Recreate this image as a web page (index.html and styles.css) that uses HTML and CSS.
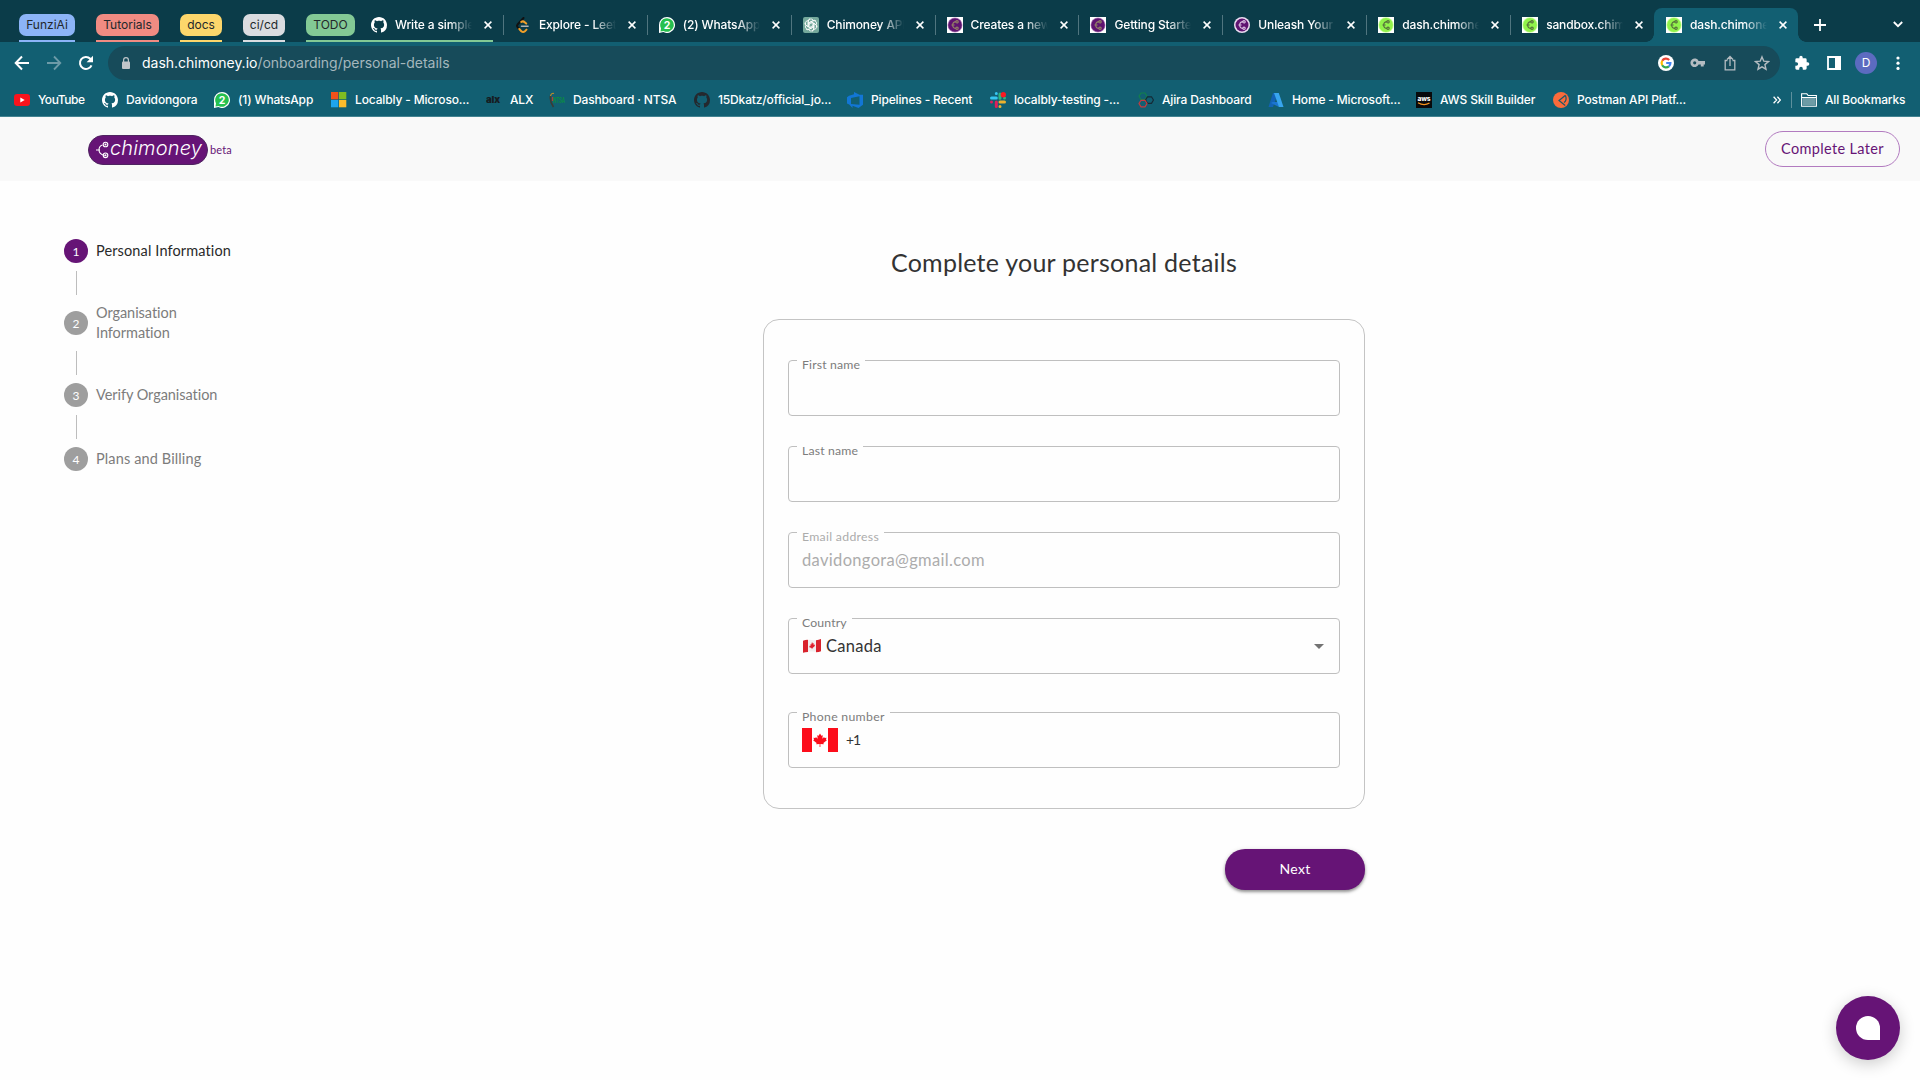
FILE: index.html
```html
<!DOCTYPE html>
<html lang="en">
<head>
<meta charset="utf-8">
<title>Chimoney – Personal details</title>
<link rel="stylesheet" href="styles.css">
</head>
<body>
<svg class="defs" aria-hidden="true">
  <symbol id="github" viewBox="0 0 16 16"><path fill="currentColor" d="M8 0C3.58 0 0 3.58 0 8c0 3.54 2.29 6.53 5.47 7.59.4.07.55-.17.55-.38 0-.19-.01-.82-.01-1.49-2.01.37-2.53-.49-2.69-.94-.09-.23-.48-.94-.82-1.13-.28-.15-.68-.52-.01-.53.63-.01 1.08.58 1.23.82.72 1.21 1.87.87 2.33.66.07-.52.28-.87.51-1.07-1.78-.2-3.64-.89-3.64-3.95 0-.87.31-1.59.82-2.15-.08-.2-.36-1.02.08-2.12 0 0 .67-.21 2.2.82.64-.18 1.32-.27 2-.27s1.36.09 2 .27c1.53-1.04 2.2-.82 2.2-.82.44 1.1.16 1.92.08 2.12.51.56.82 1.27.82 2.15 0 3.07-1.87 3.75-3.65 3.95.29.25.54.73.54 1.48 0 1.07-.01 1.93-.01 2.2 0 .21.15.46.55.38A8.01 8.01 0 0 0 16 8c0-4.42-3.58-8-8-8z"/></symbol>
  <symbol id="whatsapp" viewBox="0 0 16 16"><path fill="#fff" d="M8 0a8 8 0 1 1-3.7 15.1L0 16V8a8 8 0 0 1 8-8z"/><path fill="#25c04f" d="M8 1.2a6.8 6.8 0 1 1-3.4 12.7l-3.1.7.5-3.3A6.8 6.8 0 0 1 8 1.2z"/><text x="8.1" y="11.8" text-anchor="middle" font-size="10.5" font-weight="700" fill="#fff">2</text></symbol>
  <symbol id="branch" viewBox="0 0 16 16"><g fill="none" stroke="currentColor" stroke-width="1.2"><path d="M9.2 4.6C6.3 4.6 5.7 7 5.6 8C5.7 9.2 6.4 11.4 9.2 11.5M4.4 8h3.2"/><circle cx="10" cy="4.8" r="1.2"/><circle cx="10" cy="11.3" r="1.2"/></g></symbol>
  <symbol id="purple" viewBox="0 0 16 16"><path fill="#fff" d="M0 0h16v16H0z"/><circle cx="8" cy="8" r="7.5" fill="#b98bc2"/><circle cx="8" cy="8" r="6.8" fill="#5f1370"/><use href="#branch" color="#938066"/></symbol>
  <symbol id="purple-round" viewBox="0 0 16 16"><circle cx="8" cy="8" r="8" fill="#eadcf0"/><circle cx="8" cy="8" r="6.5" fill="#5f1370"/><use href="#branch" color="#d8bfe0"/></symbol>
  <symbol id="lime" viewBox="0 0 16 16"><path fill="#fff" d="M0 0h16v16H0z"/><circle cx="8" cy="8" r="7.7" fill="#c9ff9f"/><circle cx="8" cy="8" r="6.9" fill="#91f34b"/><use href="#branch" color="#56703c"/></symbol>
  <symbol id="close" viewBox="0 0 8 8"><path d="M.6.6l6.8 6.8M7.4.6L.6 7.4" stroke="#fff" stroke-width="1.5"/></symbol>
</svg>

<header class="browser">
  <div class="tabstrip">
    <div class="groups">
      <span class="group blue"><b>FunziAi</b></span>
      <span class="group red"><b>Tutorials</b></span>
      <span class="group yellow"><b>docs</b></span>
      <span class="group grey"><b>ci/cd</b></span>
      <span class="group green"><b>TODO</b></span>
    </div>
    <div class="tabs">
      <div class="tab grouped"><svg class="ico"><use href="#github"/></svg><span>Write a simple</span><svg class="x"><use href="#close"/></svg></div>
      <div class="tab"><svg class="ico" viewBox="0 0 16 16"><g fill="none" stroke-width="2" stroke-linecap="round"><path stroke="#111" d="M8.5 1L2.8 7.2Q1.4 8.800 2.800 10.400l1.400 1.600"/><path stroke="#f0a029" d="M4.300 12l2 2.200q1.800 1.500 3.600 0l1.600-1.600M6.200 5q1.800-1.400 3.500.2l1.500 1.400"/><path stroke="#b3b3b3" d="M6.500 9.200h6.500" stroke-width="1.600"/></g></svg><span>Explore - LeetCode</span><svg class="x"><use href="#close"/></svg></div>
      <div class="tab"><svg class="ico"><use href="#whatsapp"/></svg><span>(2) WhatsApp</span><svg class="x"><use href="#close"/></svg></div>
      <div class="tab"><svg class="ico" viewBox="0 0 16 16"><rect width="16" height="16" rx="2" fill="#75a99c"/><g fill="none" stroke="#fff" stroke-width=".8"><g id="petal"><path d="M5.200 10V4.800a2.800 2.800 0 0 1 5.200-1.500M6.400 8V5.700l3.600-2a2.800 2.800 0 0 1 3 .2"/></g><use href="#petal" transform="rotate(60 8 8)"/><use href="#petal" transform="rotate(120 8 8)"/><use href="#petal" transform="rotate(180 8 8)"/><use href="#petal" transform="rotate(240 8 8)"/><use href="#petal" transform="rotate(300 8 8)"/></g></svg><span>Chimoney API</span><svg class="x"><use href="#close"/></svg></div>
      <div class="tab"><svg class="ico"><use href="#purple"/></svg><span>Creates a new</span><svg class="x"><use href="#close"/></svg></div>
      <div class="tab"><svg class="ico"><use href="#purple"/></svg><span>Getting Started</span><svg class="x"><use href="#close"/></svg></div>
      <div class="tab"><svg class="ico"><use href="#purple-round"/></svg><span>Unleash Your</span><svg class="x"><use href="#close"/></svg></div>
      <div class="tab"><svg class="ico"><use href="#lime"/></svg><span>dash.chimoney</span><svg class="x"><use href="#close"/></svg></div>
      <div class="tab last"><svg class="ico"><use href="#lime"/></svg><span>sandbox.chimoney</span><svg class="x"><use href="#close"/></svg></div>
      <div class="tab active"><svg class="ico"><use href="#lime"/></svg><span>dash.chimoney</span><svg class="x"><use href="#close"/></svg></div>
    </div>
    <svg class="plus" viewBox="0 0 12 12"><path d="M6 0v12M0 6h12" stroke="#fff" stroke-width="1.8"/></svg>
    <svg class="chev" viewBox="0 0 10 7"><path d="M.8 1L5 5.2 9.2 1" fill="none" stroke="#fff" stroke-width="1.8"/></svg>
  </div>

  <div class="toolbar">
    <div class="nav">
      <svg viewBox="0 0 16 16"><path d="M15 8H2M8 1.5L1.7 8 8 14.5" fill="none" stroke="#fff" stroke-width="2"/></svg>
      <svg viewBox="0 0 16 16"><path d="M1 8h13M8 1.5L14.3 8 8 14.5" fill="none" stroke="#6d9ba8" stroke-width="1.8"/></svg>
      <svg viewBox="0 0 16 16"><path d="M13.5 10.3A6 6 0 1 1 12.3 3.8L14 5.5" fill="none" stroke="#fff" stroke-width="2"/><path d="M15 .8v6.4H8.6z" fill="#fff"/></svg>
    </div>
    <div class="omnibox">
      <svg class="lock" viewBox="0 0 10 12"><rect x="1" y="4.5" width="8" height="7.5" rx="1" fill="#c0c6ca"/><path d="M2.6 5V3a2.4 2.4 0 0 1 4.8 0v2" fill="none" stroke="#c0c6ca" stroke-width="1.2"/></svg>
      <span class="url"><em>dash.chimoney.io</em>/onboarding/personal-details</span>
      <div class="actions">
        <svg viewBox="0 0 16 16"><circle cx="8" cy="8" r="8" fill="#fff"/><g fill="none" stroke-width="2.2"><path stroke="#ea4335" d="M4.2 5.8A4.4 4.4 0 0 1 11.2 4.9"/><path stroke="#fbbc05" d="M4.2 5.8a4.4 4.4 0 0 0 0 4.4"/><path stroke="#34a853" d="M4.2 10.2a4.4 4.4 0 0 0 6.7 1.1"/><path stroke="#4285f4" d="M10.9 11.3A4.4 4.4 0 0 0 12.4 8H8.2"/></g></svg>
        <svg viewBox="0 0 16 16"><path fill="#b4bcc1" fill-rule="evenodd" d="M8.6 6H15v3.600h-1.300v2h-2.900v-2H8.600a4.300 4.300 0 1 1 0-3.600zM4.700 6.200a1.600 1.600 0 1 0 0 3.200 1.600 1.600 0 0 0 0-3.200z"/></svg>
        <svg viewBox="0 0 16 16"><g fill="none" stroke="#b4bcc1" stroke-width="1.3"><path d="M5.5 5.5H3.2v9.300h9.600V5.500h-2.300M8 11V1.800M5 4.500l3-3 3 3"/></g></svg>
        <svg viewBox="0 0 16 16"><path d="M8 1.9l1.800 4.300 4.600.4-3.500 3 1.100 4.600L8 11.800l-4 2.400 1.100-4.600-3.500-3 4.600-.4z" fill="none" stroke="#b4bcc1" stroke-width="1.4"/></svg>
      </div>
    </div>
    <div class="side">
      <svg viewBox="0 0 24 24"><path fill="#fff" d="M20.5 11H19V7a2 2 0 0 0-2-2h-4V3.500a2.500 2.500 0 0 0-5 0V5H4a2 2 0 0 0-2 2v3.800h1.500a2.700 2.700 0 0 1 0 5.400H2V20a2 2 0 0 0 2 2h3.800v-1.500a2.700 2.700 0 0 1 5.400 0V22H17a2 2 0 0 0 2-2v-4h1.500a2.500 2.500 0 0 0 0-5z"/></svg>
      <svg viewBox="0 0 16 16"><path d="M2 2h12v12H2z" fill="none" stroke="#fff" stroke-width="1.8"/><path fill="#fff" d="M9 1h6v14H9z"/></svg>
      <span class="avatar">D</span>
      <svg viewBox="0 0 16 16" fill="#fff"><circle cx="8" cy="3" r="1.6"/><circle cx="8" cy="8.2" r="1.6"/><circle cx="8" cy="13.4" r="1.6"/></svg>
    </div>
  </div>

  <div class="bookmarks">
    <span class="tight"><svg viewBox="0 0 16 16"><rect y="2" width="16" height="12" rx="3" fill="#f8131c"/><path fill="#fff" d="M6.3 5.5v5L10.7 8z"/></svg>YouTube</span>
    <span><svg><use href="#github"/></svg>Davidongora</span>
    <span><svg><use href="#whatsapp"/></svg>(1) WhatsApp</span>
    <span><svg viewBox="0 0 16 16"><path fill="#f1511b" d="M0 0h7.3v7.300H0z"/><path fill="#80bc22" d="M8 0h7.300v7.300H8z"/><path fill="#1ea5ee" d="M0 8h7.300v7.300H0z"/><path fill="#fbbc2c" d="M8 8h7.300v7.300H8z"/></svg>Localbly - Microso...</span>
    <span><svg viewBox="0 0 16 16"><text x="0" y="11" font-size="9.5" font-weight="900" textLength="14" lengthAdjust="spacingAndGlyphs" fill="#161d22">alx</text></svg>ALX</span>
    <span><svg viewBox="0 0 16 16"><path d="M4.5 15Q.5 9 1.500 4" fill="none" stroke="#3b3c35" stroke-width="1.600"/><path d="M1.500 4Q2.500 .5 5 1.500" fill="none" stroke="#b98a2b" stroke-width="1.200"/><path d="M3.500 5v4" stroke="#b23a3a" stroke-width="1.200"/><text x="4" y="10.500" font-size="7" font-weight="700" textLength="12" lengthAdjust="spacingAndGlyphs" fill="#0b8a45">NTSA</text></svg>Dashboard · NTSA</span>
    <span class="dark-git"><svg><use href="#github"/></svg><i>15Dkatz/official_jo...</i></span>
    <span><svg viewBox="0 0 16 16"><path fill="#1276d5" fill-rule="evenodd" d="M16 2.800v10L11.500 16l-6-2.200V16L2.200 12.600 0 11.500V5.300l2-1.600L7 2.300V0l5.500 2.800zM12.500 4.300L4 6v6l8.500.8z"/></svg>Pipelines - Recent</span>
    <span><svg viewBox="0 0 16 16"><g stroke-width="3" stroke-linecap="round"><path stroke="#36c5f0" d="M6.300 1.500v0M1.500 6h4.800"/><path stroke="#2eb67d" d="M10 2v4.300M14.500 6v0"/><path stroke="#ecb22e" d="M10 10h4.500M10 14.500v0"/><path stroke="#e01e5a" d="M6.300 10v4.500M1.500 10v0"/></g><circle cx="13.300" cy="2.800" r="2.700" fill="#fa1822"/></svg>localbly-testing -...</span>
    <span><svg viewBox="0 0 16 16"><g fill="none" stroke-width="1.200"><path stroke="#13804c" d="M3 1h4l2 3.300-2 3.200H3L1 4.300z"/><path stroke="#152a36" d="M9.500 4.800h4l2 3.200-2 3.300h-4L7.500 8z"/><path stroke="#c33b40" d="M3 8.300h4l2 3.200L7 14.800H3l-2-3.300z"/></g></svg>Ajira Dashboard</span>
    <span><svg viewBox="0 0 16 16"><path fill="#1263b5" d="M5 1h5L5 15H.5z"/><path fill="#1b75d0" d="M4.500 10H11v5L3 11z"/><path fill="#38a5ee" d="M6 1h4.800L15.500 15H11z"/></svg>Home - Microsoft...</span>
    <span><svg viewBox="0 0 16 16"><path fill="#080a0c" d="M0 0h16v16H0z"/><text x="1.500" y="8.500" font-size="7" font-weight="800" textLength="13" lengthAdjust="spacingAndGlyphs" fill="#fff">aws</text><path d="M2 10.800q6 3.500 11.500.3" fill="none" stroke="#f7941d" stroke-width="1.200"/></svg>AWS Skill Builder</span>
    <span><svg viewBox="0 0 16 16"><circle cx="8" cy="8" r="8" fill="#fb6b3b"/><path d="M12.500 3.200L6 8.500l6.200 5M12.500 3.500q1.700 5-1.500 7" fill="none" stroke="#1b5768" stroke-width="1.200"/></svg>Postman API Platf...</span>
    <span class="more"><svg viewBox="0 0 8 8"><path d="M.6.8l3 3.200-3 3.200M4.400.8l3 3.200-3 3.200" fill="none" stroke="#fff" stroke-width="1.300"/></svg></span>
    <span class="all"><svg viewBox="0 0 16 14"><path d="M.6.8h5.200l1.400 1.700h8.200v10.700H.6z" fill="none" stroke="#fff" stroke-width="1.100"/><path d="M1.500 5h13v7.500h-13z" fill="#6d9ba5"/><path d="M1 4.500h14" stroke="#fff"/></svg>All Bookmarks</span>
  </div>
</header>

<div class="appbar">
  <div class="brand">
    <div class="logo"><svg viewBox="0 0 14 18"><g fill="none" stroke="#fff" stroke-width="1.100"><path d="M6.500 4Q3 5 3 9t5.500 5.500M0 9h4"/><circle cx="9.500" cy="3.500" r="2.300"/><circle cx="9.500" cy="14.300" r="2.300"/><circle cx="9.500" cy="3.500" r=".5"/><circle cx="9.500" cy="14.300" r=".5"/></g></svg><span>chimoney</span></div>
    <small>beta</small>
  </div>
  <button class="later">Complete Later</button>
</div>

<main class="page">
  <ol class="steps">
    <li class="on"><b>1</b><span>Personal Information</span></li>
    <li><b>2</b><span class="snug">Organisation Information</span></li>
    <li><b>3</b><span class="snug">Verify Organisation</span></li>
    <li><b>4</b><span>Plans and Billing</span></li>
  </ol>
  <section class="form">
    <h1>Complete your personal details</h1>
    <div class="card">
      <div class="field"><label>First name</label></div>
      <div class="field"><label>Last name</label></div>
      <div class="field disabled"><label class="wide">Email address</label><span class="email">davidongora@gmail.com</span></div>
      <div class="field"><label>Country</label><svg class="flag" viewBox="0 0 18 14"><path fill="#f1eeee" d="M0 2q5-2 9-1t9-1v12q-5 1-9 .5T0 13.500z"/><path fill="#d9222c" d="M0 1.800Q3 .7 5 .9v12Q2 13 0 13.800zM13 1.200Q16 .8 18 0v12.300q-2 .9-5 1z"/><path fill="#e0202c" d="M9 3l.8 1.600 1-.4-.2 1.700 1.500-.5-.5 1.900-2 1.600-.6 1.300-.5-1.200-2.200-.8.300-1.500 1.100.1-.4-1.500 1 .3z"/></svg><span class="country">Canada</span><svg class="arrow" viewBox="0 0 10 5"><path d="M0 0h10L5 5z" fill="#737373"/></svg></div>
      <div class="field phone"><label class="wide">Phone number</label><svg class="bigflag" viewBox="0 0 36 24"><path fill="#fff" d="M0 0h36v24H0z"/><path fill="#fc0d1b" d="M0 0h10v24H0zM26 0h10v24H26zM18 5.500l1.400 2.300 1.400-.6-.5 3.500 1.800-1.800.5 1.100 2-.3-.7 1.800 1 .7-3.500 2.900.4 1.200-3.400-.4v3.100h-.8v-3.100l-3.400.4.400-1.200-3.500-2.900 1-.7-.7-1.800 2 .3.500-1.100 1.800 1.800-.5-3.500 1.400.6z"/></svg><span class="code">+1</span></div>
    </div>
    <button class="next">Next</button>
  </section>
</main>
<button class="chat" aria-label="Open chat"><i></i></button>
</body>
</html>
```
FILE: styles.css
```css
* { box-sizing: border-box; }
body { margin: 0; height: 1080px; overflow: hidden; background: #fefefe; font-family: Lato, "Open Sans", sans-serif; color: #222; }
svg { display: block; flex: none; }
button { font: inherit; }
.defs { display: none; }

/* Browser window */
.browser { height: 117px; background: #125f72; border-bottom: 1px solid #438391; font: 500 12px/16px Inter, sans-serif; letter-spacing: -.15px; color: #fff; }
.tabstrip { display: flex; align-items: flex-end; height: 42px; padding-left: 19px; background: #0b3c49; }
.groups { display: flex; gap: 21px; height: 28px; }
.group { display: flex; flex-direction: column; justify-content: space-between; color: var(--c); border-bottom: 2px solid; }
.group b { height: 22px; border-radius: 7px; background: var(--c); color: #23282b; font-weight: 400; line-height: 22px; text-align: center; letter-spacing: 0; }
.blue { --c: #8cb4f7; width: 56px; }
.red { --c: #f08b82; width: 63px; }
.yellow { --c: #fdd66b; width: 42px; }
.grey { --c: #dadce0; width: 42px; }
.green { --c: #83c995; width: 49px; }
.tabs { display: flex; height: 34px; margin-left: 4px; }
.tab { position: relative; display: flex; align-items: center; width: 143.9px; padding: 0 10px 0 12px; }
.tab::after { content: ""; position: absolute; right: -1px; top: 7px; width: 1px; height: 20px; background: #50757f; }
.tab.last::after, .tab.active::after { display: none; }
.tab .ico { width: 16px; height: 16px; }
.tab span { width: 77px; margin: 0 12px 0 8px; overflow: hidden; white-space: nowrap; -webkit-mask-image: linear-gradient(90deg, #000 70%, transparent); mask-image: linear-gradient(90deg, #000 70%, transparent); }
.tab .x { width: 8px; height: 8px; }
.grouped::before { content: ""; position: absolute; left: -4px; width: 138px; bottom: 0; height: 2px; background: #83c995; }
.active { background: #125f72; border-radius: 8px 8px 0 0; }
.active::before { content: ""; position: absolute; left: -8px; right: -8px; bottom: 0; height: 8px; background: radial-gradient(circle at 0 0, transparent 7.5px, #125f72 8px) 0 0 / 8px 8px no-repeat, radial-gradient(circle at 100% 0, transparent 7.5px, #125f72 8px) 100% 0 / 8px 8px no-repeat; }
.plus { width: 12px; height: 12px; margin: 0 0 11px 16px; }
.chev { width: 10px; height: 7px; margin: 0 17px 14px auto; }

.toolbar { display: flex; align-items: center; height: 42px; padding: 0 14px; }
.toolbar svg { width: 16px; height: 16px; }
.nav { display: flex; gap: 16px; width: 94px; }
.omnibox { display: flex; align-items: center; width: 1672px; height: 34px; padding: 0 10px 0 13px; border-radius: 17px; background: #174b5a; }
.omnibox .lock { width: 10px; height: 12px; }
.url { margin-left: 11px; font-size: 14px; line-height: 20px; letter-spacing: -.02px; color: #a4b7bd; font-weight: 400; }
.url em { font-style: normal; color: #fff; }
.actions { display: flex; gap: 16px; margin-left: auto; }
.side { display: flex; align-items: center; gap: 16px; padding-left: 14px; }
.avatar { width: 22px; height: 22px; margin: 0 -3px; border-radius: 50%; background: #5c6bc0; text-align: center; line-height: 22px; font-weight: 400; }

.bookmarks { display: grid; grid-template-columns: 88px 112px 117px 155px 63px 145px 153px 143px 148px 130px 148px 137px 220px 18px 1fr; height: 32px; padding-left: 14px; align-items: center; white-space: nowrap; }
.bookmarks span { display: flex; align-items: center; gap: 8px; }
.bookmarks svg { width: 16px; height: 16px; }
.bookmarks i { font-style: normal; }
.bookmarks .tight { letter-spacing: -.45px; }
.dark-git svg { color: #24292e; }
.bookmarks .more svg { width: 8px; height: 8px; }
.bookmarks .all { height: 16px; padding-left: 9px; border-left: 1px solid #5d909d; }
.bookmarks .all svg { height: 14px; }

/* Application header */
.appbar { display: flex; align-items: center; justify-content: space-between; height: 64px; padding: 0 20px 0 88px; background: #f9f9f9; color: #661476; }
.brand { display: flex; align-items: center; gap: 2px; margin-top: 2px; }
.logo { display: flex; align-items: center; width: 120px; height: 30px; padding-left: 7px; border: 1px solid #4f2461; border-radius: 15px; background: #661476; color: #fff; }
.logo svg { width: 14px; height: 18px; }
.logo span { margin: -4px 0 0; font: italic 300 20px/24px Inter, sans-serif; letter-spacing: .15px; }
.brand small { font-size: 11px; line-height: 14px; letter-spacing: .15px; }
.later { width: 135px; height: 36px; padding: 0 0 2px; border: 1px solid #b27bc0; border-radius: 18px; background: transparent; color: #661476; font-size: 14.5px; letter-spacing: .35px; }

/* Page */
.page { display: flex; padding: 50px 0 0 64px; }
.steps { width: 172px; margin: 0; padding: 0; list-style: none; font-size: 14.5px; line-height: 20px; color: #7c7c7c; }
.steps li { display: flex; align-items: center; gap: 8px; padding: 8px 0; letter-spacing: .13px; }
.steps li:not(:last-child) { position: relative; margin-bottom: 24px; }
.steps li:not(:last-child)::after { content: ""; position: absolute; left: 12px; top: 100%; width: 1px; height: 24px; background: #bdbdbd; }
.steps b { flex: none; width: 24px; height: 24px; border-radius: 50%; background: #9e9e9e; color: #fff; font-size: 12px; font-weight: 400; line-height: 25px; text-align: center; letter-spacing: 0; }
.steps span { max-width: 140px; }
.steps .snug { letter-spacing: -.05px; }
.steps .on { color: #2a2a2a; }
.steps .on b { background: #661476; }
.form { display: flex; flex-direction: column; width: 602px; margin-left: 527px; }
h1 { margin: 15px 0 41px; font-size: 25px; font-weight: 400; line-height: 32px; letter-spacing: .24px; text-align: center; color: #333; }
.card { display: flex; flex-direction: column; gap: 30px; height: 490px; padding: 40px 24px; border: 1px solid #c4c4c4; border-radius: 16px; }
.field { position: relative; display: flex; align-items: center; height: 56px; padding: 0 15px 0 13px; border: 1px solid #bfbfbf; border-radius: 4px; font-size: 16.5px; line-height: 20px; letter-spacing: .28px; color: #333; }
.field label { position: absolute; left: 8px; top: -5px; padding: 0 5px; background: #fefefe; color: #7c7c7c; font-size: 12.25px; line-height: 17px; letter-spacing: .15px; }
.field label.wide { letter-spacing: .3px; }
.disabled, .field.disabled label { color: #acacac; }
.email { letter-spacing: .33px; }
.field.disabled { color: #acacac; }
.flag { width: 18px; height: 14px; margin-left: 1px; }
.country { margin-left: 5px; }
.arrow { width: 10px; height: 5px; margin-left: auto; }
.phone { margin-top: 8px; }
.bigflag { width: 36px; height: 24px; }
.code { margin-left: 8px; font-size: 14px; letter-spacing: -1.2px; }
.next { align-self: flex-end; width: 140px; height: 41px; margin-top: 40px; padding: 0 0 2px; border: 0; border-radius: 20px; background: #661476; color: #fff; font-size: 14px; letter-spacing: .3px; box-shadow: 0 2px 3px rgba(0,0,0,.35), 0 1px 5px rgba(0,0,0,.15); }
.chat { position: fixed; right: 20px; bottom: 20px; display: grid; place-items: center; width: 64px; height: 64px; padding: 0; border: 0; border-radius: 50%; background: #661476; box-shadow: 0 4px 16px rgba(0,0,0,.2); }
.chat i { width: 24px; height: 24px; border-radius: 12px 12px 0 12px; background: #fff; }
```
